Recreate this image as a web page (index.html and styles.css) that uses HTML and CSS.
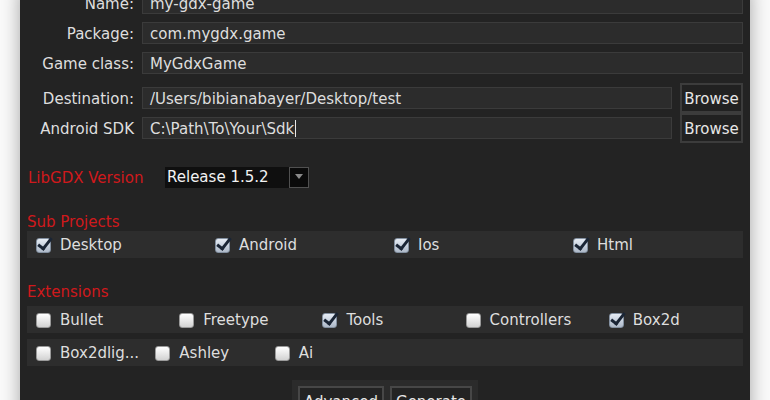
FILE: index.html
```html
<!DOCTYPE html>
<html lang="en">
<head>
    <meta charset="UTF-8">
    <meta name="viewport" content="width=device-width, initial-scale=1.0">
    <title>LibGDX Project Generator</title>
    <link rel="stylesheet" href="styles.css">
</head>
<body>
    <div class="window">
        <div class="form-group">
            <div class="form-row">
                <span class="row-label">Name:</span>
                <div class="field">my-gdx-game</div>
            </div>
            <div class="form-row">
                <span class="row-label">Package:</span>
                <div class="field">com.mygdx.game</div>
            </div>
            <div class="form-row">
                <span class="row-label">Game class:</span>
                <div class="field">MyGdxGame</div>
            </div>
        </div>
        <div class="form-group paths">
            <div class="form-row">
                <span class="row-label">Destination:</span>
                <div class="field">/Users/bibianabayer/Desktop/test</div>
                <button class="browse">Browse</button>
            </div>
            <div class="form-row">
                <span class="row-label">Android SDK</span>
                <div class="field">C:\Path\To\Your\Sdk<span class="caret"></span></div>
                <button class="browse">Browse</button>
            </div>
        </div>

        <div class="version-row">
            <span class="section-title">LibGDX Version</span>
            <div class="select">
                <span class="select-value">Release 1.5.2</span>
                <span class="select-arrow"></span>
            </div>
        </div>

        <div class="section">
            <div class="section-title">Sub Projects</div>
            <div class="check-row cols-4">
                <label class="check"><span class="box on"></span>Desktop</label>
                <label class="check"><span class="box on"></span>Android</label>
                <label class="check"><span class="box on"></span>Ios</label>
                <label class="check"><span class="box on"></span>Html</label>
            </div>
        </div>

        <div class="section extensions">
            <div class="section-title">Extensions</div>
            <div class="check-row cols-5">
                <label class="check"><span class="box"></span>Bullet</label>
                <label class="check"><span class="box"></span>Freetype</label>
                <label class="check"><span class="box on"></span>Tools</label>
                <label class="check"><span class="box"></span>Controllers</label>
                <label class="check"><span class="box on"></span>Box2d</label>
            </div>
            <div class="check-row cols-6">
                <label class="check"><span class="box"></span>Box2dlig...</label>
                <label class="check"><span class="box"></span>Ashley</label>
                <label class="check"><span class="box"></span>Ai</label>
            </div>
        </div>

        <div class="actions">
            <button class="action-button">Advanced</button>
            <button class="action-button">Generate</button>
        </div>
    </div>
</body>
</html>
```

FILE: styles.css
```css
html, body {
    margin: 0;
    padding: 0;
}
body {
    background-color: #fafafa;
    font-family: "DejaVu Sans", Verdana, sans-serif;
    font-size: 15px;
    color: #dedede;
    height: 400px;
    overflow: hidden;
}
.window {
    margin: -12px 0 0 20px;
    width: 730px;
    height: 440px;
    box-sizing: border-box;
    padding: 0 7px;
    background: #232323;
    box-shadow: 0 0 18px rgba(0, 0, 0, 0.35);
}
.form-row {
    display: flex;
    align-items: center;
    gap: 8px;
    height: 30px;
}
.paths {
    margin-top: 5px;
}
.row-label {
    width: 107px;
    text-align: right;
    white-space: nowrap;
    padding-top: 1px;
}
.field {
    flex: 1;
    height: 22px;
    box-sizing: border-box;
    border: 1px solid #3b3b3b;
    background: #2c2c2c;
    padding: 1px 7px 0;
    line-height: 20px;
    white-space: nowrap;
}
.caret {
    display: inline-block;
    width: 1px;
    height: 17px;
    margin-left: 1px;
    background: #e8e8e8;
    vertical-align: -3px;
}
.browse {
    width: 63px;
    height: 30px;
    box-sizing: border-box;
    border: 2px solid #3c3c3c;
    background: #212121;
    color: #e6e6e6;
    font: inherit;
    padding: 1px 0 0;
}
.section-title {
    color: #d0191c;
    line-height: 18px;
}
.version-row {
    display: flex;
    align-items: center;
    margin-top: 24px;
    height: 21px;
    padding-left: 1px;
}
.version-row .section-title {
    width: 137px;
}
.select {
    display: flex;
    height: 21px;
    width: 144px;
    background: #0f0f0f;
}
.select-value {
    flex: 1;
    color: #f2f2f2;
    line-height: 21px;
    padding-left: 2px;
}
.select-arrow {
    width: 20px;
    box-sizing: border-box;
    border: 1px solid #505050;
    background: #0a0a0a;
    position: relative;
}
.select-arrow::after {
    content: "";
    position: absolute;
    left: 5px;
    top: 6px;
    border-left: 4px solid transparent;
    border-right: 4px solid transparent;
    border-top: 5px solid #8a8a8a;
}
.section {
    margin-top: 25px;
}
.extensions .section-title {
    margin-bottom: 5px;
}
.check-row {
    display: grid;
    height: 27px;
    background: #2d2d2d;
    align-items: center;
}
.check-row + .check-row {
    margin-top: 6px;
}
.cols-4 {
    grid-template-columns: repeat(4, 1fr);
}
.cols-5 {
    grid-template-columns: repeat(5, 1fr);
}
.cols-6 {
    grid-template-columns: repeat(6, 1fr);
}
.check {
    display: flex;
    align-items: center;
    gap: 9px;
    padding-left: 9px;
    padding-top: 1px;
    white-space: nowrap;
}
.box {
    position: relative;
    width: 15px;
    height: 15px;
    box-sizing: border-box;
    border-radius: 3px;
    border: 1px solid #9a9a9a;
    background: linear-gradient(#ffffff, #e4e4e4 60%, #d2d2d2);
}
.box.on {
    background: linear-gradient(#e6ecf4, #c4cedb 60%, #aeb9c8);
    border-color: #8390a0;
}
.box.on::after {
    content: "";
    position: absolute;
    left: 4px;
    top: -4px;
    width: 5px;
    height: 12px;
    border-right: 3px solid #1a2535;
    border-bottom: 3px solid #1a2535;
    transform: rotate(38deg);
}
.actions {
    display: flex;
    gap: 6px;
    width: fit-content;
    margin: 14px auto 0;
    padding: 6px;
    background: #2b2b2b;
}
.action-button {
    height: 30px;
    box-sizing: border-box;
    border: 2px solid #474747;
    background: #232323;
    color: #e6e6e6;
    font: inherit;
    padding: 2px 4px 0;
}
```
